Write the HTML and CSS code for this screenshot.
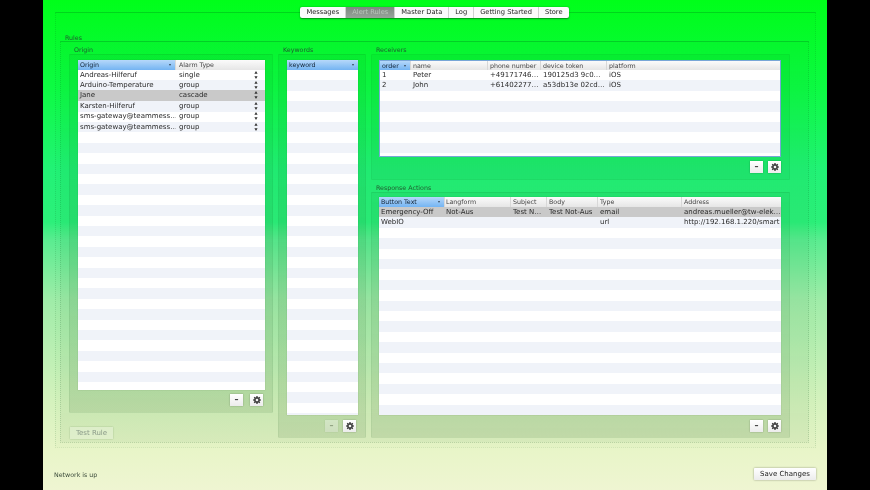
FILE: index.html
```html
<!DOCTYPE html>
<html lang="en">
<head>
<meta charset="utf-8">
<title>Alert Rules</title>
<link rel="stylesheet" href="styles.css">
</head>
<body>
<svg class="defs" width="0" height="0" aria-hidden="true">
  <symbol id="gear" viewBox="0 0 16 16">
    <path fill="#444" fill-rule="evenodd" d="M6.8 0h2.4l.4 2.2 1.300.6 1.900-1.300 1.700 1.700-1.300 1.900.6 1.300 2.200.4v2.400l-2.200.4-.6 1.300 1.300 1.900-1.700 1.700-1.900-1.300-1.300.6-.4 2.200H6.800l-.4-2.200-1.300-.6-1.900 1.300-1.700-1.700 1.300-1.900-.6-1.300L0 9.200V6.800l2.200-.4.6-1.300-1.300-1.900 1.700-1.700 1.900 1.300 1.300-.6zM8 5.400a2.600 2.600 0 1 0 0 5.200 2.600 2.600 0 0 0 0-5.200z"/>
  </symbol>
  <symbol id="step" viewBox="0 0 5 10">
    <path fill="#333" d="M2.500 0 4.500 3.500H.5zM2.500 10 .5 6.500h4z"/>
  </symbol>
</svg>
<div class="window">
  <div class="tabbox">
    <nav class="tabs">
      <span class="tab">Messages</span>
      <span class="tab active">Alert Rules</span>
      <span class="tab">Master Data</span>
      <span class="tab">Log</span>
      <span class="tab">Getting Started</span>
      <span class="tab">Store</span>
    </nav>
    <div class="title rules-title">Rules</div>
    <section class="rules">
      <div class="col-left">
        <div class="title">Origin</div>
        <div class="panel origin-panel">
          <div class="tbl origin">
            <div class="row head"><span class="c o1 sorted">Origin<i class="arrow"></i></span><span class="c o2">Alarm Type</span></div>
            <div class="body">
              <div class="row"><span class="c o1">Andreas-Hilferuf</span><span class="c o2">single<svg class="step"><use href="#step"/></svg></span></div>
              <div class="row"><span class="c o1">Arduino-Temperature</span><span class="c o2">group<svg class="step"><use href="#step"/></svg></span></div>
              <div class="row sel"><span class="c o1">Jane</span><span class="c o2">cascade<svg class="step"><use href="#step"/></svg></span></div>
              <div class="row"><span class="c o1">Karsten-Hilferuf</span><span class="c o2">group<svg class="step"><use href="#step"/></svg></span></div>
              <div class="row"><span class="c o1">sms-gateway@teammess…</span><span class="c o2">group<svg class="step"><use href="#step"/></svg></span></div>
              <div class="row"><span class="c o1">sms-gateway@teammess…</span><span class="c o2">group<svg class="step"><use href="#step"/></svg></span></div>
            </div>
          </div>
          <div class="btns btns-origin"><button class="sq">–</button><button class="sq"><svg class="gear"><use href="#gear"/></svg></button></div>
        </div>
        <button class="test">Test Rule</button>
      </div>
      <div class="col-key">
        <div class="title">Keywords</div>
        <div class="panel key-panel">
          <div class="tbl keywords">
            <div class="row head"><span class="c k1 sorted">keyword<i class="arrow"></i></span></div>
            <div class="body"></div>
          </div>
          <div class="btns btns-key"><button class="sq off">–</button><button class="sq"><svg class="gear"><use href="#gear"/></svg></button></div>
        </div>
      </div>
      <div class="col-right">
        <div class="title">Receivers</div>
        <div class="panel recv-panel">
          <div class="tbl receivers">
            <div class="row head"><span class="c r1 sorted">order<i class="arrow"></i></span><span class="c r2">name</span><span class="c r3">phone number</span><span class="c r4">device token</span><span class="c r5">platform</span></div>
            <div class="body">
              <div class="row"><span class="c r1">1</span><span class="c r2">Peter</span><span class="c r3">+49171746…</span><span class="c r4">190125d3 9c0…</span><span class="c r5">iOS</span></div>
              <div class="row"><span class="c r1">2</span><span class="c r2">John</span><span class="c r3">+61402277…</span><span class="c r4">a53db13e 02cd…</span><span class="c r5">iOS</span></div>
            </div>
          </div>
          <div class="btns"><button class="sq">–</button><button class="sq"><svg class="gear"><use href="#gear"/></svg></button></div>
        </div>
        <div class="title resp-title">Response Actions</div>
        <div class="panel resp-panel">
          <div class="tbl response">
            <div class="row head"><span class="c a1 sorted">Button Text<i class="arrow"></i></span><span class="c a2">Langform</span><span class="c a3">Subject</span><span class="c a4">Body</span><span class="c a5">Type</span><span class="c a6">Address</span></div>
            <div class="body">
              <div class="row sel"><span class="c a1">Emergency-Off</span><span class="c a2">Not-Aus</span><span class="c a3">Test N…</span><span class="c a4">Test Not-Aus</span><span class="c a5">email</span><span class="c a6">andreas.mueller@tw-elek…</span></div>
              <div class="row"><span class="c a1">WebIO</span><span class="c a2"></span><span class="c a3"></span><span class="c a4"></span><span class="c a5">url</span><span class="c a6">http://192.168.1.220/smart</span></div>
            </div>
          </div>
          <div class="btns"><button class="sq">–</button><button class="sq"><svg class="gear"><use href="#gear"/></svg></button></div>
        </div>
      </div>
    </section>
  </div>
  <footer class="foot">
    <span class="status">Network is up</span>
    <button class="save">Save Changes</button>
  </footer>
</div>
</body>
</html>
```

FILE: styles.css
```css
html, body { margin: 0; padding: 0; height: 100%; background: #000; overflow: hidden; }
.defs { position: absolute; }
.window {
  box-sizing: border-box;
  width: 784px;
  height: 490px;
  margin-left: 43px;
  padding-top: 12px;
  display: flex;
  flex-direction: column;
  font-family: "DejaVu Sans", sans-serif;
  font-size: 7px;
  color: #2c3a2c;
  background: linear-gradient(#00ff1a 0, #0dfb44 90px, #22f276 170px, #2cf07a 222px, #5aec90 240px, #9feca8 300px, #d4f2bd 400px, #e8f5c8 450px, #eff5d2 490px);
  filter: blur(.4px);
}
.tabbox {
  box-sizing: border-box;
  height: 436px;
  flex: none;
  margin: 0 11px 0 12px;
  padding: 0 6px 0 4px;
  border-top: 1px solid rgba(0,80,20,.22);
  border-left: 1px dotted rgba(0,80,20,.14);
  border-right: 1px dotted rgba(0,80,20,.14);
  border-bottom: 1px dotted rgba(0,80,20,.08);
  background: rgba(0,60,20,.012);
}
.tabs {
  display: flex;
  width: max-content;
  height: 11px;
  margin: -6px auto 0;
  background: #fbfbfb;
  border-radius: 2px;
  box-shadow: 0 .5px 1.5px rgba(0,0,0,.45);
  color: #222;
}
.tab {
  display: flex;
  align-items: center;
  padding: 0 6px;
  font-size: 6.7px;
  line-height: 11px;
  border-right: 1px solid #d0d0d0;
}
.tab:last-child { border-right: 0; }
.tab.active { background: linear-gradient(#7d8a80, #98a39a); color: #b8c6bb; }
.title { height: 8px; line-height: 8px; font-size: 6.3px; color: #205a30; padding-left: 5px; white-space: nowrap; }
.rules-title { margin-top: 16px; padding-left: 5px; height: 7px; }
.rules {
  box-sizing: border-box;
  height: 402px;
  margin-top: 0;
  padding: 4px 19px 0 8px;
  display: flex;
  gap: 5px;
  border: 1px dotted rgba(0,70,20,.16);
  border-top: 1px solid rgba(0,70,20,.2);
  background: linear-gradient(rgba(0,70,20,.025), rgba(0,70,20,.05));
}
.col-left { width: 204px; display: flex; flex-direction: column; }
.col-key { width: 88px; display: flex; flex-direction: column; }
.col-right { width: 419px; display: flex; flex-direction: column; }
.panel {
  box-sizing: border-box;
  padding: 5px 8px 0 8px;
  border: 1px solid rgba(0,70,20,.05);
  border-radius: 1px;
  background: rgba(0,70,20,.05);
}
.origin-panel, .key-panel, .resp-panel { background: linear-gradient(rgba(0,70,20,.05), rgba(20,70,15,.1)); }
.origin-panel { height: 359px; }
.key-panel { height: 384px; }
.recv-panel { height: 126px; padding-left: 7px; }
.resp-panel { height: 246px; padding: 4px 8px 0 7px; }
.resp-title { margin-top: 4px; padding-left: 5px; height: 8px; }
.tbl { box-sizing: border-box; display: flex; flex-direction: column; background: #fff; box-shadow: 0 0 1px rgba(0,60,20,.25); overflow: hidden; }
.origin { width: 187px; height: 330px; }
.keywords { width: 71px; height: 355px; }
.receivers { width: 402px; height: 97px; border: 1px solid #78a6d6; box-shadow: none; }
.response { width: 402px; height: 218px; }
.row { display: flex; height: 10.4px; line-height: 10.4px; white-space: nowrap; }
.row.head {
  flex: none;
  height: 9.6px;
  line-height: 9.6px;
  font-size: 6.3px;
  color: #444;
  background: linear-gradient(#fbfbfb, #e6e6e6);
}
.receivers .row.head { height: 8.6px; }
.body {
  flex: 1;
  background: repeating-linear-gradient(#fff 0, #fff 10.4px, #f0f3f9 10.4px, #f0f3f9 20.8px);
  color: #2a2a2a;
}
.sel { background: #c9c9c9; }
.c { position: relative; box-sizing: border-box; padding-left: 2px; overflow: hidden; flex: none; }
.head .c { border-right: 1px solid #d8d8d8; }
.head .c:last-child { border-right: 0; }
.head .sorted { background: linear-gradient(#b6d8fa, #74b4f2); color: #123; }
.arrow {
  position: absolute;
  right: 4px;
  top: 3.5px;
  border-left: 1.5px solid transparent;
  border-right: 1.5px solid transparent;
  border-top: 2px solid #345;
}
.step { position: absolute; right: 7px; top: 1px; width: 4px; height: 8px; }
.o1 { width: 98px; }
.o2 { width: 89px; padding-left: 3px; }
.k1 { width: 71px; }
.r1 { width: 31px; padding-left: 2px; }
.r2 { width: 77px; }
.r3 { width: 53px; }
.r4 { width: 66px; }
.r5 { flex: 1; }
.a1 { width: 66px; }
.a2 { width: 66px; padding-left: 1px; }
.a3 { width: 36px; }
.a4 { width: 51px; }
.a5 { width: 84px; }
.a6 { flex: 1; }
.btns { display: flex; justify-content: flex-end; gap: 5px; margin-top: 4px; }
.btns-origin { gap: 7px; padding-right: 1px; }
.btns-key { padding-right: 1px; }
.keywords + .btns, .response + .btns { margin-top: 5px; }
.sq {
  box-sizing: border-box;
  width: 13px;
  height: 12px;
  padding: 0;
  border: 0;
  display: flex;
  align-items: center;
  justify-content: center;
  background: linear-gradient(#fff, #ececec);
  box-shadow: 0 0 1.500px rgba(0,0,0,.3);
  font: bold 8px/12px "DejaVu Sans", sans-serif;
  color: #444;
}
.sq.off { opacity: .35; }
.gear { width: 8px; height: 8px; }
.test {
  flex: none;
  width: 43px;
  height: 12px;
  margin: 14px 0 0 1px;
  padding: 0;
  border: 0;
  background: rgba(235,245,225,.45);
  box-shadow: 0 0 1.500px rgba(0,50,0,.25);
  font: 7px/12px "DejaVu Sans", sans-serif;
  color: #8a9a88;
}
.foot {
  flex: 1;
  display: flex;
  align-items: center;
  justify-content: space-between;
  padding: 10px 11px 0 11px;
}
.status { font-size: 6.3px; color: #3a4a3a; }
.save {
  width: 62px;
  height: 12px;
  padding: 0;
  border: 0;
  background: linear-gradient(#fff, #ececec);
  box-shadow: 0 0 2px rgba(0,0,0,.45);
  border-radius: 1px;
  font: 7px/12px "DejaVu Sans", sans-serif;
  color: #222;
}
```
